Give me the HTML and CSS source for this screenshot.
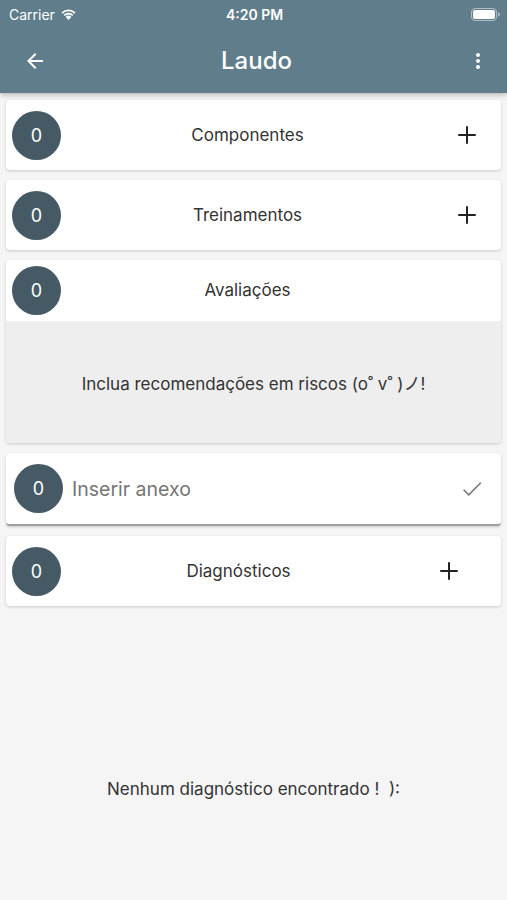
FILE: index.html
```html
<!DOCTYPE html>
<html lang="pt">
<head>
    <meta charset="UTF-8">
    <meta name="viewport" content="width=device-width, initial-scale=1.0">
    <title>Laudo</title>
    <link rel="stylesheet" href="styles.css">
</head>
<body>

    <header class="topbar">
        <div class="status-bar">
            <div class="status-left">
                <span>Carrier</span>
                <svg class="wifi" width="17" height="12" viewBox="0 0 17 12">
                    <path d="M8.5 12 L5.6 8.9 A4.2 4.2 0 0 1 11.4 8.9 Z" fill="#fff"/>
                    <path d="M3.6 6.8 A7 7 0 0 1 13.4 6.8 L12.2 8.1 A5.3 5.3 0 0 0 4.8 8.1 Z" fill="#fff"/>
                    <path d="M1.4 4.4 A10.2 10.2 0 0 1 15.6 4.4 L14.4 5.7 A8.5 8.5 0 0 0 2.6 5.7 Z" fill="#fff"/>
                </svg>
            </div>
            <span class="status-time">4:20 PM</span>
            <div class="status-right">
                <svg width="29" height="13" viewBox="0 0 29 13">
                    <rect x="0.5" y="0.5" width="25" height="12" rx="3.5" fill="none" stroke="rgba(255,255,255,0.5)"/>
                    <rect x="2" y="2" width="22" height="9" rx="2" fill="#fff"/>
                    <path d="M27 4.5 a2 2 0 0 1 0 4 Z" fill="rgba(255,255,255,0.5)"/>
                </svg>
            </div>
        </div>
        <div class="app-bar">
            <svg class="app-icon" width="24" height="24" viewBox="0 0 24 24">
                <path d="M20 11H7.83l5.59-5.59L12 4l-8 8 8 8 1.41-1.41L7.83 13H20v-2z" fill="#fff"/>
            </svg>
            <h1 class="app-title">Laudo</h1>
            <svg class="app-icon" width="24" height="24" viewBox="0 0 24 24">
                <path d="M12 8c1.1 0 2-.9 2-2s-.9-2-2-2-2 .9-2 2 .9 2 2 2zm0 2c-1.1 0-2 .9-2 2s.9 2 2 2 2-.9 2-2-.9-2-2-2zm0 6c-1.1 0-2 .9-2 2s.9 2 2 2 2-.9 2-2-.9-2-2-2z" fill="#fff"/>
            </svg>
        </div>
    </header>

    <main class="list">
        <div class="card">
            <div class="card-row">
                <div class="count">0</div>
                <div class="card-label">Componentes</div>
                <svg class="plus" width="30" height="30" viewBox="0 0 24 24">
                    <path d="M19 12.8h-6.2V19h-1.6v-6.2H5v-1.6h6.2V5h1.6v6.2H19v1.6z" fill="#222"/>
                </svg>
            </div>
        </div>

        <div class="card">
            <div class="card-row">
                <div class="count">0</div>
                <div class="card-label">Treinamentos</div>
                <svg class="plus" width="30" height="30" viewBox="0 0 24 24">
                    <path d="M19 12.8h-6.2V19h-1.6v-6.2H5v-1.6h6.2V5h1.6v6.2H19v1.6z" fill="#222"/>
                </svg>
            </div>
        </div>

        <div class="card">
            <div class="card-row card-row-short">
                <div class="count">0</div>
                <div class="card-label">Avaliações</div>
                <div class="plus-space"></div>
            </div>
            <div class="card-empty">Inclua recomendações em riscos (o˚ v˚ )ノ!</div>
        </div>

        <div class="card card-input">
            <div class="card-row">
                <div class="count">0</div>
                <div class="input-text">Inserir anexo</div>
                <svg class="check" width="26" height="26" viewBox="0 0 24 24">
                    <path d="M9 16.4L4.8 12.2l-1 1L9 18.4 20.6 6.8l-1-1L9 16.4z" fill="#757575"/>
                </svg>
            </div>
        </div>

        <div class="card">
            <div class="card-row">
                <div class="count">0</div>
                <div class="card-label">Diagnósticos</div>
                <svg class="plus plus-inner" width="30" height="30" viewBox="0 0 24 24">
                    <path d="M19 12.8h-6.2V19h-1.6v-6.2H5v-1.6h6.2V5h1.6v6.2H19v1.6z" fill="#222"/>
                </svg>
            </div>
        </div>

        <div class="empty-message">Nenhum diagnóstico encontrado !&nbsp; ):</div>
    </main>

</body>
</html>
```

FILE: styles.css
```css
body {
    margin: 0;
    font-family: Inter, "Noto Sans CJK JP", sans-serif;
    background-color: #f5f5f5;
    color: #333;
}

.topbar {
    background-color: #607d8b;
    color: #fff;
    box-shadow: 0 2px 5px rgba(0, 0, 0, 0.25);
    position: relative;
    z-index: 1;
}

.status-bar {
    height: 28px;
    display: flex;
    align-items: center;
    justify-content: space-between;
    padding: 0 7px 0 9px;
    font-size: 14px;
}

.status-left {
    display: flex;
    align-items: center;
    gap: 5px;
    width: 100px;
}

.status-time {
    font-weight: 600;
    font-size: 14px;
}

.status-right {
    width: 100px;
    display: flex;
    justify-content: flex-end;
}

.app-bar {
    height: 65px;
    display: flex;
    align-items: center;
    justify-content: space-between;
    padding: 0 17px 0 23px;
}

.app-title {
    margin: 0;
    font-size: 24px;
    font-weight: 500;
}

.list {
    padding-top: 2px;
}

.card {
    background-color: #fff;
    margin: 5px 6px 10px;
    border-radius: 4px;
    box-shadow: 0 1px 3px rgba(0, 0, 0, 0.18);
    overflow: hidden;
}

.card-row {
    height: 70px;
    display: flex;
    align-items: center;
    padding: 0 19px 0 6px;
}

.card-row-short {
    height: 61px;
    align-items: flex-start;
    padding-top: 6px;
    box-sizing: border-box;
}

.card-row-short .card-label {
    line-height: 49px;
}

.count {
    width: 49px;
    height: 49px;
    border-radius: 50%;
    background-color: #455a64;
    color: #fff;
    font-size: 18px;
    display: flex;
    align-items: center;
    justify-content: center;
    flex-shrink: 0;
}

.card-label {
    flex: 1;
    text-align: center;
    font-size: 17px;
    color: #333;
    padding-right: 18px;
}

.plus {
    flex-shrink: 0;
}

.plus-inner {
    margin-right: 18px;
}

.plus-space {
    width: 30px;
}

.card-empty {
    background-color: #eeeeee;
    height: 122px;
    display: flex;
    align-items: center;
    justify-content: center;
    font-size: 17px;
    color: #333;
}

.card-input {
    border-bottom: 2px solid #9e9e9e;
}

.card-input .card-row {
    padding-left: 8px;
    padding-right: 16px;
    height: 71px;
}

.input-text {
    flex: 1;
    font-size: 19.5px;
    color: #757575;
    padding-left: 9px;
}

.empty-message {
    text-align: center;
    font-size: 17px;
    color: #333;
    padding-top: 163px;
}
```
